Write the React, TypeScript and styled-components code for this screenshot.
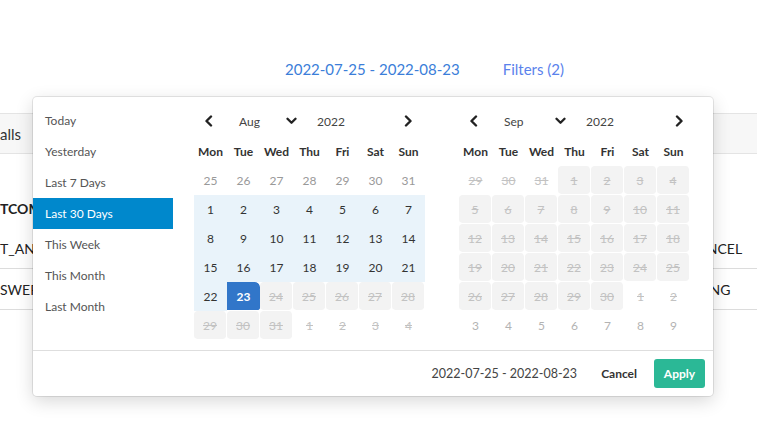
import React from "react";
import styled, { createGlobalStyle, css } from "styled-components";

const GlobalStyle = createGlobalStyle`
  html, body { margin: 0; padding: 0; background: #fff; }
  body { font-family: "Lato", "Noto Sans", sans-serif; color: #333; overflow: hidden; }
  * { box-sizing: border-box; }
`;

const Page = styled.div`
  position: relative;
  width: 757px;
  height: 434px;
  overflow: hidden;
`;

const TopBar = styled.div`
  height: 113px;
  display: flex;
  align-items: flex-start;
  gap: 43px;
  padding: 59px 0 0 285px;
`;

const TopLink = styled.a<{ $tone: string }>`
  font-size: 15px;
  line-height: 20px;
  color: ${(p) => p.$tone};
  text-decoration: none;
  white-space: nowrap;
`;

const TabBar = styled.div`
  height: 41px;
  background: #f7f7f7;
  border-top: 1px solid #e4e4e4;
  border-bottom: 1px solid #e4e4e4;
  display: flex;
  align-items: center;
  font-size: 15px;
  color: #333;
`;

const Table = styled.div`
  padding-top: 34px;
`;

const Row = styled.div<{ $head?: boolean }>`
  height: ${(p) => (p.$head ? "40px" : "41px")};
  display: flex;
  align-items: center;
  border-bottom: ${(p) => (p.$head ? "none" : "1px solid #dcdcdc")};
  font-size: 14px;
  font-weight: ${(p) => (p.$head ? 700 : 400)};
  color: #222;
  padding-top: ${(p) => (p.$head ? "0" : "1px")};
`;

const LeftCell = styled.div`
  width: 33px;
  white-space: nowrap;
  overflow: hidden;
`;

const RightCell = styled.div`
  margin-left: auto;
  width: 44px;
  white-space: nowrap;
  overflow: hidden;
`;

const Shifted = styled.span<{ $shift: number }>`
  display: inline-block;
  margin-left: ${(p) => p.$shift}px;
`;

/* ---------- Picker ---------- */

const Picker = styled.div`
  position: absolute;
  left: 33px;
  top: 97px;
  width: 680px;
  height: 299px;
  background: #fff;
  border-radius: 4px;
  box-shadow: 0 0 0 1px rgba(0, 0, 0, 0.09), 0 5px 18px rgba(0, 0, 0, 0.16);
  display: flex;
  flex-direction: column;
`;

const Body = styled.div`
  display: flex;
  padding-top: 8px;
  flex: 1;
`;

const Ranges = styled.ul`
  list-style: none;
  margin: 0;
  padding: 0;
  width: 140px;
  flex: none;
`;

const RangeItem = styled.li<{ $active?: boolean }>`
  height: 31px;
  display: flex;
  align-items: center;
  padding-left: 12px;
  padding-bottom: 1px;
  font-size: 12px;
  color: ${(p) => (p.$active ? "#fff" : "#555")};
  background: ${(p) => (p.$active ? "#0088cc" : "transparent")};
`;

const Calendars = styled.div`
  display: flex;
  gap: 34px;
  padding-left: 21px;
`;

const Calendar = styled.div`
  width: 231px;
`;

const MonthHeader = styled.div`
  height: 32px;
  display: flex;
  align-items: center;
`;

const NavBtn = styled.button<{ $side: "prev" | "next"; $edge?: number }>`
  width: 30px;
  height: 32px;
  border: 0;
  background: none;
  padding: 0;
  display: flex;
  align-items: center;
  justify-content: center;
  margin-left: ${(p) => (p.$side === "next" ? "auto" : "0")};
  margin-right: ${(p) => (p.$side === "next" ? `${p.$edge ?? 2}px` : "0")};
  color: #222;
`;

const MonthSelect = styled.div<{ $width: number }>`
  width: ${(p) => p.$width}px;
  display: flex;
  align-items: center;
  justify-content: space-between;
  padding: 0 6px 0 15px;
  font-size: 12px;
  color: #444;
`;

const YearText = styled.div`
  margin-left: 14px;
  font-size: 12px;
  color: #444;
`;

const Grid = styled.div`
  display: grid;
  grid-template-columns: repeat(7, 33px);
  grid-auto-rows: 29px;
`;

const DayName = styled.div`
  display: flex;
  align-items: center;
  justify-content: center;
  font-size: 12px;
  font-weight: 700;
  color: #333;
`;

type Kind = "normal" | "muted" | "range" | "selected" | "disabled" | "offStruck" | "offPlain";

const Day = styled.div<{ $kind: Kind }>`
  display: flex;
  align-items: center;
  justify-content: center;
  font-size: 12px;
  color: #333;
  ${(p) =>
    p.$kind === "muted" &&
    css`
      color: #999;
    `}
  ${(p) =>
    p.$kind === "range" &&
    css`
      background: #e9f3fa;
    `}
  ${(p) =>
    p.$kind === "selected" &&
    css`
      background: #3176c9;
      background-clip: padding-box;
      border-bottom: 1px solid transparent;
      color: #fff;
      font-weight: 700;
      border-radius: 0 5px 3px 0;
    `}
  ${(p) =>
    p.$kind === "disabled" &&
    css`
      background: #f3f3f3;
      background-clip: padding-box;
      border-right: 1px solid #fff;
      border-bottom: 1px solid #fff;
      border-radius: 4px;
      color: #c2c2c2;
      text-decoration: line-through;
    `}
  ${(p) =>
    p.$kind === "offStruck" &&
    css`
      color: #c2c2c2;
      text-decoration: line-through;
    `}
  ${(p) =>
    p.$kind === "offPlain" &&
    css`
      color: #b3b3b3;
    `}
`;

const Footer = styled.div`
  height: 46px;
  border-top: 1px solid #dedede;
  display: flex;
  align-items: center;
  justify-content: flex-end;
  padding-right: 8px;
`;

const FooterRange = styled.span`
  font-size: 12.5px;
  color: #444;
  margin-right: 24px;
`;

const CancelBtn = styled.button`
  border: 0;
  background: none;
  padding: 0;
  font-family: inherit;
  font-size: 12px;
  font-weight: 700;
  color: #333;
  margin-right: 17px;
`;

const ApplyBtn = styled.button`
  width: 51px;
  height: 29px;
  border: 0;
  border-radius: 3px;
  background: #2bb896;
  color: #fff;
  font-family: inherit;
  font-size: 12px;
  font-weight: 700;
  padding: 0;
`;

const Chevron = ({ dir }: { dir: "left" | "right" }) => (
  <svg width="10" height="12" viewBox="0 0 10 12">
    <polyline
      points={dir === "left" ? "7,1.5 2.5,6 7,10.5" : "3,1.5 7.5,6 3,10.5"}
      fill="none"
      stroke="currentColor"
      strokeWidth="2.4"
      strokeLinecap="round"
      strokeLinejoin="round"
    />
  </svg>
);

const Caret = () => (
  <svg width="11" height="8" viewBox="0 0 11 8">
    <polyline
      points="1.5,1.8 5.5,5.8 9.5,1.8"
      fill="none"
      stroke="#222"
      strokeWidth="2.3"
      strokeLinecap="round"
      strokeLinejoin="round"
    />
  </svg>
);

const dayNames = ["Mon", "Tue", "Wed", "Thu", "Fri", "Sat", "Sun"];

type Cell = { d: number; k: Kind };

const augCells: Cell[] = [
  ...[25, 26, 27, 28, 29, 30, 31].map((d) => ({ d, k: "muted" as Kind })),
  ...Array.from({ length: 22 }, (_, i) => ({ d: i + 1, k: "range" as Kind })),
  { d: 23, k: "selected" },
  ...[24, 25, 26, 27, 28, 29, 30, 31].map((d) => ({ d, k: "disabled" as Kind })),
  ...[1, 2, 3, 4].map((d) => ({ d, k: "offStruck" as Kind })),
];

const sepCells: Cell[] = [
  ...[29, 30, 31].map((d) => ({ d, k: "offStruck" as Kind })),
  ...Array.from({ length: 30 }, (_, i) => ({ d: i + 1, k: "disabled" as Kind })),
  ...[1, 2].map((d) => ({ d, k: "offStruck" as Kind })),
  ...[3, 4, 5, 6, 7, 8, 9].map((d) => ({ d, k: "offPlain" as Kind })),
];

const MonthCal = ({
  month,
  cells,
  selectWidth,
  nextEdge,
}: {
  month: string;
  cells: Cell[];
  selectWidth: number;
  nextEdge: number;
}) => (
  <Calendar>
    <MonthHeader>
      <NavBtn $side="prev">
        <Chevron dir="left" />
      </NavBtn>
      <MonthSelect $width={selectWidth}>
        <span>{month}</span>
        <Caret />
      </MonthSelect>
      <YearText>2022</YearText>
      <NavBtn $side="next" $edge={nextEdge}>
        <Chevron dir="right" />
      </NavBtn>
    </MonthHeader>
    <Grid>
      {dayNames.map((n) => (
        <DayName key={n}>{n}</DayName>
      ))}
      {cells.map((c, i) => (
        <Day key={i} $kind={c.k}>
          {c.d}
        </Day>
      ))}
    </Grid>
  </Calendar>
);

const ranges = ["Today", "Yesterday", "Last 7 Days", "Last 30 Days", "This Week", "This Month", "Last Month"];

export default function App() {
  return (
    <Page>
      <GlobalStyle />
      <TopBar>
        <TopLink $tone="#3b7ed9">2022-07-25 - 2022-08-23</TopLink>
        <TopLink $tone="#5a82ec">Filters (2)</TopLink>
      </TopBar>
      <TabBar>alls</TabBar>
      <Table>
        <Row $head>
          <LeftCell>TCOME</LeftCell>
        </Row>
        <Row>
          <LeftCell>T_ANSWERED</LeftCell>
          <RightCell>
            <Shifted $shift={-25}>CANCEL</Shifted>
          </RightCell>
        </Row>
        <Row>
          <LeftCell>SWERED</LeftCell>
          <RightCell>
            <Shifted $shift={-41}>RINGING</Shifted>
          </RightCell>
        </Row>
      </Table>

      <Picker>
        <Body>
          <Ranges>
            {ranges.map((r) => (
              <RangeItem key={r} $active={r === "Last 30 Days"}>
                {r}
              </RangeItem>
            ))}
          </Ranges>
          <Calendars>
            <MonthCal month="Aug" cells={augCells} selectWidth={79} nextEdge={2} />
            <MonthCal month="Sep" cells={sepCells} selectWidth={83} nextEdge={-4} />
          </Calendars>
        </Body>
        <Footer>
          <FooterRange>2022-07-25 - 2022-08-23</FooterRange>
          <CancelBtn>Cancel</CancelBtn>
          <ApplyBtn>Apply</ApplyBtn>
        </Footer>
      </Picker>
    </Page>
  );
}
